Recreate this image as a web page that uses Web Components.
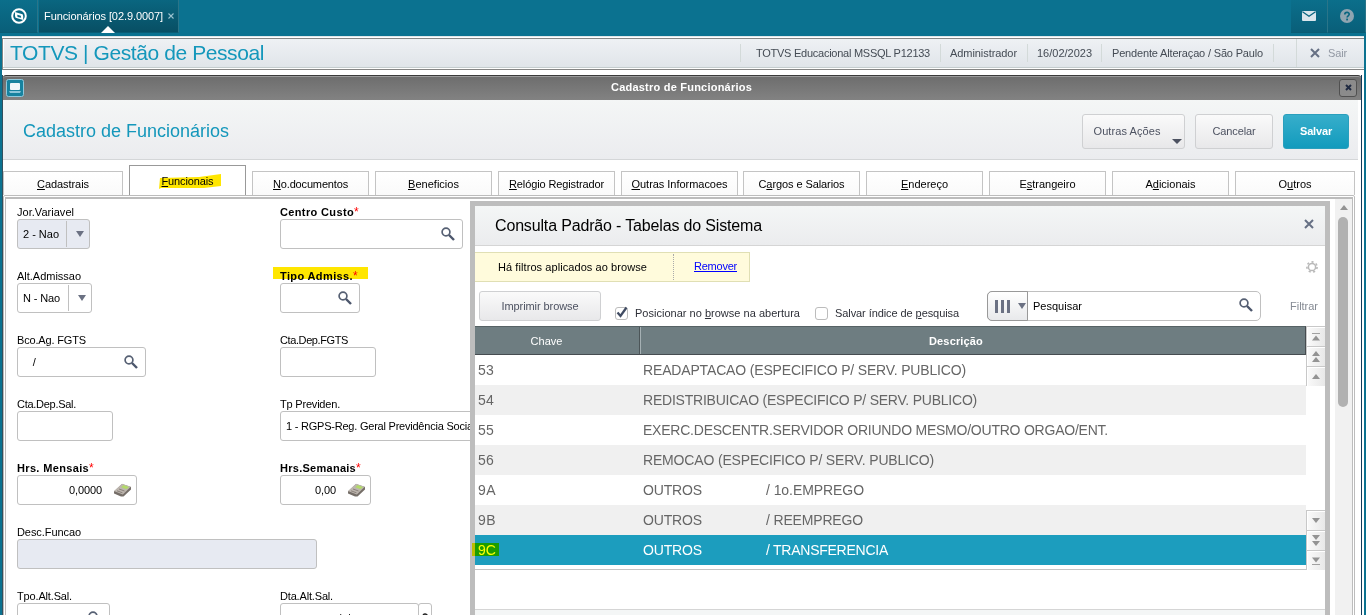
<!DOCTYPE html>
<html lang="pt-BR">
<head>
<meta charset="utf-8">
<title>Cadastro de Funcionários</title>
<style>
  html, body { margin: 0; height: 615px; overflow: hidden; }
  body {
    width: 1366px;
    background: #0b7290;
    font: 11px/15px "Liberation Sans", Arial, sans-serif;
    color: #000;
  }
</style>
</head>
<body>
<rh-app></rh-app>

<script>
const icons = {
  logo: `<svg width="16" height="16" viewBox="0 0 16 16"><circle cx="8" cy="8" r="6.800" fill="none" stroke="#fff" stroke-width="2"/><path d="M4 4L8 5.200 11.600 6.200 12.200 8V12L8 10.800 4.600 9.800 4 8z" fill="#fff"/><path d="M6.200 6.800l3.600.9.300 2L6.600 8.900z" fill="#0b6a84"/></svg>`,
  mail: `<svg width="14" height="10" viewBox="0 0 14 10"><rect width="14" height="10" rx="1" fill="#dbe6ec"/><path d="M.5.8L7 5.300 13.500.8" fill="none" stroke="#0a6680" stroke-width="1.300"/></svg>`,
  help: `<svg width="14" height="14" viewBox="0 0 14 14"><circle cx="7" cy="7" r="7" fill="#90a5b1"/><path d="M4.800 5.500C4.800 2.600 9.300 2.700 9.200 5.300 9.100 6.800 7.100 6.900 7.100 8.600" fill="none" stroke="#0a6680" stroke-width="1.700"/><rect x="6.200" y="9.600" width="1.800" height="1.800" fill="#0a6680"/></svg>`,
  search: `<svg width="14" height="14" viewBox="0 0 14 14"><circle cx="5" cy="5" r="3.900" fill="none" stroke="#566073" stroke-width="1.700"/><path d="M8 8l5 5" stroke="#4c566c" stroke-width="2.400"/></svg>`,
  close: `<svg width="10" height="10" viewBox="0 0 10 10"><path d="M1 1l8 8M9 1L1 9" stroke="#667084" stroke-width="2"/></svg>`,
  tiny: `<svg width="6" height="6" viewBox="0 0 6 6"><path d="M.5.5l5 5M5.500.5l-5 5" stroke="#9cc3d0" stroke-width="1.100"/></svg>`,
  down: `<svg width="8" height="6" viewBox="0 0 8 6"><path d="M0 0h8L4 6z" fill="#6b7183"/></svg>`,
  screen: `<svg width="18" height="18" viewBox="0 0 18 18"><rect x=".5" y=".5" width="17" height="17" rx="2" fill="#16829f" stroke="#8fc9dc"/><rect x="4" y="4" width="10" height="7" rx="1" fill="#eef6fa"/><path d="M3 12h12l-1 2H4z" fill="#8cc6da"/></svg>`,
  calc: `<svg width="19" height="14" viewBox="0 0 19 14"><path d="M1 8.500L9 1l9 3v2.500L10.500 13.500 8 13.500 1 10.500z" fill="#756e68"/><path d="M1 8L9 .8l8.800 3L9.800 11.500z" fill="#bdb6af"/><path d="M10.500 2l5.500 1.900-2.500 2.400-5.300-2z" fill="#b3da6a"/><path d="M4 7.800l5.500 2M6 6l5.500 2" stroke="#8a817a" stroke-width="1"/></svg>`,
  gear: `<svg width="12" height="12" viewBox="0 0 12 12"><circle cx="6" cy="6" r="3.600" fill="none" stroke="#b9b9b9" stroke-width="1.500"/><circle cx="6" cy="6" r="5.100" fill="none" stroke="#b9b9b9" stroke-width="1.600" stroke-dasharray="2.100 2.475"/></svg>`,
  check: `<svg width="15" height="15" viewBox="0 0 15 15"><path d="M3.500 6.500l3 3.500L12.500 1.500" fill="none" stroke="#414c63" stroke-width="2.300"/></svg>`,
  columns: `<svg width="15" height="13" viewBox="0 0 15 13"><path d="M1.500 0v13M7.500 0v13M13.500 0v13" stroke="#6b7183" stroke-width="3"/></svg>`,
  up: `<svg width="8" height="5" viewBox="0 0 8 5"><path d="M0 5h8L4 0z" fill="#939393"/></svg>`,
  top: `<svg width="8" height="8" viewBox="0 0 8 8"><path d="M0 .5h8" stroke="#a0a0a0"/><path d="M0 7.500h8L4 2.500z" fill="#939393"/></svg>`,
  up2: `<svg width="8" height="11" viewBox="0 0 8 11"><path d="M0 5h8L4 0zM0 11h8L4 6z" fill="#939393"/></svg>`,
  dn: `<svg width="8" height="5" viewBox="0 0 8 5"><path d="M0 0h8L4 5z" fill="#939393"/></svg>`,
  dn2: `<svg width="8" height="11" viewBox="0 0 8 11"><path d="M0 0h8L4 5zM0 6h8l-4 5z" fill="#939393"/></svg>`,
  bottom: `<svg width="8" height="8" viewBox="0 0 8 8"><path d="M0 7.500h8" stroke="#a0a0a0"/><path d="M0 .5h8l-4 5z" fill="#939393"/></svg>`
};

class UiIcon extends HTMLElement {
  connectedCallback() {
    if (this.shadowRoot) return;
    this.attachShadow({ mode: 'open' }).innerHTML = `
      <style>:host { display: block; flex: none; } svg { display: block; }</style>
      ${icons[this.getAttribute('name')] || ''}`;
  }
}

// Text with a fixed measure: the letter spacing is adjusted to the "w" width
class FitText extends HTMLElement {
  connectedCallback() {
    if (this.shadowRoot) return;
    this.attachShadow({ mode: 'open' }).innerHTML = `
      <style>:host { display: inline-block; flex: none; } span { white-space: pre; }</style><span><slot></slot></span>`;
    const w = Number(this.getAttribute('w'));
    if (!w) return;
    const natural = this.shadowRoot.querySelector('span').getBoundingClientRect().width;
    this.style.letterSpacing = (w - natural) / this.textContent.length + 'px';
    this.style.width = w + 'px';
  }
}

class TopBar extends HTMLElement {
  connectedCallback() {
    this.attachShadow({ mode: 'open' }).innerHTML = `
      <style>
        :host { display: flex; height: 36px; color: #fff; }
        .box { height: 33px; display: flex; align-items: center; justify-content: center; box-sizing: border-box;
          background: linear-gradient(#0b6f8b, #095f79); border-right: 1px solid #2a7589; border-bottom: 1px solid #0a5c74; }
        .logo { width: 38px; margin-right: 1px; }
        .tab { width: 140px; background: linear-gradient(#0a6680, #084f64); position: relative; justify-content: flex-start; padding-left: 5px; gap: 5px; }
        .tab::after { content: ""; position: absolute; left: 62px; bottom: -1px; border: 7px solid transparent; border-top: 0; border-bottom-color: #fff; }
        .mail { width: 37px; margin-left: auto; }
        .help { width: 38px; }
      </style>
      <div class="box logo"><ui-icon name="logo"></ui-icon></div>
      <div class="box tab"><fit-text w="119">Funcionários [02.9.0007]</fit-text><ui-icon name="tiny"></ui-icon></div>
      <div class="box mail"><ui-icon name="mail"></ui-icon></div>
      <div class="box help"><ui-icon name="help"></ui-icon></div>`;
  }
}

class AppHeader extends HTMLElement {
  connectedCallback() {
    this.attachShadow({ mode: 'open' }).innerHTML = `
      <style>
        :host { display: flex; align-items: center; box-sizing: border-box; height: 32px; margin-bottom: 5px;
          background: linear-gradient(#eef1f4, #dfe4e9); border: 1px solid #858585; border-right: 0;
          box-shadow: inset 0 -1px #fff, inset 0 -2px #c4ccce, inset 1px 0 #fff; color: #444b54; }
        h1 { margin: -2px auto 0 7px; font: 21px/26px "Liberation Sans", Arial, sans-serif; color: #1497bb; }
        .cell { height: 18px; line-height: 18px; box-sizing: border-box; border-left: 1px solid #d3dad9; margin-top: -2px; }
        .exit { height: 28px; width: 68px; display: flex; align-items: center; gap: 8px; padding-left: 13px; color: #9298a3; }
      </style>
      <h1><fit-text w="254">TOTVS | Gestão de Pessoal</fit-text></h1>
      <div class="cell" style="width:200px;padding-left:15px"><fit-text w="174">TOTVS Educacional MSSQL P12133</fit-text></div>
      <div class="cell" style="width:87px;padding-left:9px"><fit-text w="67">Administrador</fit-text></div>
      <div class="cell" style="width:74px;padding-left:9px"><fit-text w="55">16/02/2023</fit-text></div>
      <div class="cell" style="width:172px;padding-left:10px"><fit-text w="151">Pendente Alteraçao / São Paulo</fit-text></div>
      <div class="cell" style="width:23px"></div>
      <div class="cell exit"><ui-icon name="close"></ui-icon><fit-text w="19">Sair</fit-text></div>`;
  }
}

class WindowTitle extends HTMLElement {
  connectedCallback() {
    this.attachShadow({ mode: 'open' }).innerHTML = `
      <style>
        :host { display: flex; align-items: center; justify-content: space-between; height: 25px; box-sizing: border-box;
          padding: 0 4px 1px 3px; background: linear-gradient(#6d6d6d, #828282); border-top: 1px solid #3a3a3a;
          box-shadow: inset 0 1px #9b9b9b; border-radius: 3px 3px 0 0; color: #fff; font-weight: bold; }
        .close { width: 18px; height: 18px; box-sizing: border-box; border: 1px solid #505050; border-radius: 3px;
          background: #8b8b8b; display: grid; place-items: center; }
      </style>
      <ui-icon name="screen"></ui-icon>
      <fit-text w="141">${this.textContent}</fit-text>
      <div class="close"><svg width="7" height="7"><path d="M1 1l5 5M6 1L1 6" stroke="#202b42" stroke-width="2"/></svg></div>`;
  }
}

class UiButton extends HTMLElement {
  connectedCallback() {
    this.attachShadow({ mode: 'open' }).innerHTML = `
      <style>
        :host { display: flex; align-items: center; justify-content: center; box-sizing: border-box; position: relative;
          border: 1px solid #cfd0d2; border-radius: 3px; background: linear-gradient(#fafafa, #e8e8ea); color: #4d5261; }
        :host([primary]) { background: linear-gradient(#37aecb, #129bbd); border-color: #2a9fbd; color: #fff; font-weight: bold; }
        :host([menu]) { padding-right: 13px; }
        :host([menu])::after { content: ""; position: absolute; right: 2px; bottom: 4px; border: 5px solid transparent; border-bottom: 0; border-top-color: #4d5261; }
      </style><slot></slot>`;
  }
}

class FormTab extends HTMLElement {
  connectedCallback() {
    this.attachShadow({ mode: 'open' }).innerHTML = `
      <style>
        :host { display: flex; align-items: center; justify-content: center; box-sizing: border-box; width: 117px; height: 24px;
          border: 1px solid #c4c4c4; border-bottom: 0; background: linear-gradient(#fff, #fafafa); position: relative; padding-top: 1px; }
        :host([edge]) { width: 120px; }
        :host([active]) { height: 30px; border-color: #999; background: #fff; padding-top: 2px; }
        .text { position: relative; }
        svg { position: absolute; left: 29px; top: 8px; }
      </style>
      ${this.hasAttribute('active') ? '<svg width="64" height="16"><path d="M1 4L40 3 62 0v12l-17 2H2L0 15z" fill="#ffe600"/></svg>' : ''}
      <span class="text"><slot></slot></span>`;
  }
}

class FormField extends HTMLElement {
  connectedCallback() {
    const get = (name) => this.getAttribute(name) || '';
    const req = this.hasAttribute('required');
    const value = get('value') ? `<fit-text w="${get('vw')}">${get('value')}</fit-text>` : '';
    const icon = get('icon') ? `<span class="icon"><ui-icon name="${get('icon')}"></ui-icon></span>` : '';
    this.attachShadow({ mode: 'open' }).innerHTML = `
      <style>
        :host { display: block; height: 64px; }
        .label { height: 15px; line-height: 16px; position: relative; ${req ? 'font-weight: bold;' : ''} white-space: nowrap; }
        .label fit-text { position: relative; }
        .label em { color: #f00; font-style: normal; position: relative; font-weight: normal; font-size: 12px; }
        .mark { position: absolute; left: -7px; top: -1px; width: 95px; height: 12px; background: #ffe600; }
        .box { display: flex; align-items: center; height: 30px; box-sizing: border-box; width: ${get('width')}px;
          border: 1px solid #c0c0c0; border-radius: 3px; padding-left: 5px; background: #fff; }
        :host([disabled]) .box { background: #e7eaf2; }
        :host([numeric]) .box { justify-content: flex-end; }
        .icon { margin-left: auto; padding-right: 7px; }
        :host([select]) .icon { height: 26px; padding: 0 5px 0 9px; border-left: 1px solid #c0c0c0; display: flex; align-items: center; }
        :host([numeric]) .icon { padding-right: 4px; margin-left: 11px; }
        .row { display: flex; }
      </style>
      <div class="label">${this.hasAttribute('marked') ? '<span class="mark"></span>' : ''}<fit-text w="${get('lw')}">${get('label')}</fit-text>${req ? '<em>*</em>' : ''}</div>
      <div class="row"><div class="box">${value}${icon}</div><slot></slot></div>`;
  }
}

class EmployeeForm extends HTMLElement {
  connectedCallback() {
    this.attachShadow({ mode: 'open' }).innerHTML = `
      <style>
        :host { display: grid; grid-template-columns: 263px 1fr; grid-auto-rows: 64px; align-content: start; padding: 5px 0 0 11px; flex: 1; }
        .wide { grid-column: 1 / 3; }
        .cal { width: 14px; height: 30px; box-sizing: border-box; border: 1px solid #c0c0c0; border-radius: 3px; margin-left: -1px; display: flex; justify-content: center; padding-top: 9px; }
      </style>
      <form-field label="Jor.Variavel" lw="57" width="73" value="2 - Nao" vw="36" icon="down" select disabled></form-field>
      <form-field label="Centro Custo" lw="74" width="183" icon="search" required></form-field>
      <form-field label="Alt.Admissao" lw="64" width="75" value="N - Nao" vw="37" icon="down" select></form-field>
      <form-field label="Tipo Admiss." lw="73" width="80" icon="search" required marked></form-field>
      <form-field label="Bco.Ag. FGTS" lw="69" width="129" value="   /" vw="13" icon="search"></form-field>
      <form-field label="Cta.Dep.FGTS" lw="68" width="96"></form-field>
      <form-field label="Cta.Dep.Sal." lw="59" width="96"></form-field>
      <form-field label="Tp Previden." lw="60" width="260" value="1 - RGPS-Reg. Geral Previdência Social" vw="189"></form-field>
      <form-field label="Hrs. Mensais" lw="72" width="120" value="0,0000" vw="33" icon="calc" required numeric></form-field>
      <form-field label="Hrs.Semanais" lw="76" width="91" value="0,00" vw="21" icon="calc" required numeric></form-field>
      <form-field class="wide" label="Desc.Funcao" lw="64" width="300" disabled></form-field>
      <form-field label="Tpo.Alt.Sal." lw="55" width="93" icon="search"></form-field>
      <form-field label="Dta.Alt.Sal." lw="53" width="139" value="                  /  /" vw="64"><span class="cal"><svg width="6" height="8"><path d="M1 2Q3 0 5 2v3L3 7" fill="none" stroke="#222" stroke-width="1.500"/></svg></span></form-field>`;
  }
}

class BrowseTable extends HTMLElement {
  connectedCallback() {
    const rows = [
      ['53', 'READAPTACAO (ESPECIFICO P/ SERV. PUBLICO)', 323],
      ['54', 'REDISTRIBUICAO (ESPECIFICO P/ SERV. PUBLICO)', 334],
      ['55', 'EXERC.DESCENTR.SERVIDOR ORIUNDO MESMO/OUTRO ORGAO/ENT.', 465],
      ['56', 'REMOCAO (ESPECIFICO P/ SERV. PUBLICO)', 291],
      ['9A', 'OUTROS', 59, '/ 1o.EMPREGO', 98],
      ['9B', 'OUTROS', 59, '/ REEMPREGO', 97],
      ['9C', 'OUTROS', 59, '/ TRANSFERENCIA', 122]
    ];
    this.attachShadow({ mode: 'open' }).innerHTML = `
      <style>
        :host { display: flex; height: 244px; }
        .grid { width: 831px; border-bottom: 1px solid #c4c4c4; box-sizing: border-box; }
        .row { display: grid; grid-template-columns: 165px 123px 1fr; height: 30px; line-height: 30px; font-size: 14px; color: #666; }
        .row:nth-child(odd) { background: #f0f0f0; }
        .row.on { background: #1c9dbe; color: #fff; position: relative; }
        .row > fit-text { margin-left: 3px; }
        .row.long { grid-template-columns: 165px 1fr; }
        .head { display: grid; grid-template-columns: 165px 1fr; height: 29px; box-sizing: border-box; line-height: 28px; text-align: center;
          background: #6e7d81; color: #fff; border-top: 1px solid #566265; border-bottom: 1px solid #464c50; border-right: 1px solid #464c50; }
        .head div { height: 27px; }
        .head div + div { border-left: 1px solid #a5b0b3; font-weight: bold; padding-right: 34px; }
        .head div:first-child { border-right: 1px solid #4c5558; padding-right: 21px; }
        .mark { position: absolute; left: -3px; top: 8px; width: 27px; height: 13px; background: #ff0; mix-blend-mode: multiply; }
        .nav { width: 19px; display: flex; flex-direction: column; }
        .nav div { height: 20px; box-sizing: border-box; border: 1px solid #c8c8c8; border-width: 1px 0 0 1px; display: grid; place-items: center;
          background: linear-gradient(90deg, #fafafa, #e8e8e8); box-shadow: inset 1px 1px #fff; }
        .gap { flex: 1; }
      </style>
      <div class="grid">
        <div class="head"><div><fit-text w="32">Chave</fit-text></div><div><fit-text w="54">Descrição</fit-text></div></div>
        ${rows.map((r, i) => `<div class="row ${r[3] ? '' : 'long'} ${i === 6 ? 'on' : ''}">
          <fit-text w="${i < 4 ? 16 : 18}">${r[0]}</fit-text><fit-text w="${r[2]}">${r[1]}</fit-text>${r[3] ? `<fit-text w="${r[4]}">${r[3]}</fit-text>` : ''}
          ${i === 6 ? '<span class="mark"></span>' : ''}</div>`).join('')}
      </div>
      <div class="nav">
        <div><ui-icon name="top"></ui-icon></div><div><ui-icon name="up2"></ui-icon></div><div><ui-icon name="up"></ui-icon></div>
        <span class="gap"></span>
        <div><ui-icon name="dn"></ui-icon></div><div><ui-icon name="dn2"></ui-icon></div><div><ui-icon name="bottom"></ui-icon></div>
      </div>`;
  }
}

class LookupDialog extends HTMLElement {
  connectedCallback() {
    this.attachShadow({ mode: 'open' }).innerHTML = `
      <style>
        :host { display: block; box-sizing: border-box; width: 860px; height: 420px; border: 5px solid #bdbdbd; background: #fff; }
        header { display: flex; align-items: center; justify-content: space-between; height: 40px; box-sizing: border-box; padding: 1px 11px 0 20px;
          background: linear-gradient(#f4f6f6, #ebecee); border-bottom: 1px solid #d5d5d5; font-size: 16px; line-height: 20px; }
        header ui-icon { margin-top: -4px; }
        .filters { display: flex; justify-content: space-between; margin: 6px 7px 9px 0; align-items: center; height: 30px; }
        .filters > ui-icon { margin-top: -1px; }
        .notice { display: flex; align-items: center; height: 30px; width: 275px; box-sizing: border-box; border: 1px solid #e0dfb4; border-left: 0; background: #fffbdc; }
        .notice .msg { width: 199px; padding-left: 23px; box-sizing: border-box; border-right: 1px dotted #aaa; line-height: 26px; }
        .notice a { color: #00f; margin: -2px 0 0 20px; text-decoration: underline; }
        .notice a fit-text { text-decoration: underline; }
        .tools { display: flex; height: 30px; margin: 0 0 5px 4px; align-items: center; }
        .tools ui-button { width: 122px; height: 30px; margin-right: 14px; }
        .check { width: 13px; height: 13px; box-sizing: border-box; border: 1px solid #bcbcbc; border-radius: 3px; margin: 14px 7px 0 0; position: relative; color: #222; }
        .check ui-icon { position: absolute; left: -2px; top: -2px; }
        .lbl { margin: 14px 15px 0 0; color: #2e3038; }
        .search { display: flex; align-items: center; width: 274px; height: 30px; box-sizing: border-box; border: 1px solid #c0c0c0; border-radius: 5px; margin-left: auto; padding-right: 7px; }
        .cols { display: flex; gap: 8px; align-items: center; height: 30px; width: 41px; margin: -1px 5px -1px -1px; padding-left: 7px; box-sizing: border-box;
          border: 1px solid #999; border-radius: 5px 0 0 5px; background: linear-gradient(#fff, #e8e9eb); }
        .search > ui-icon { margin: -2px 0 0 auto; }
        .filter { color: #868b94; margin: 0 7px 0 29px; }
        footer { margin-top: 39px; border-top: 1px solid #d5d5d5; background: #f4f6f6; height: 12px; }
      </style>
      <header><fit-text w="267">Consulta Padrão - Tabelas do Sistema</fit-text><ui-icon name="close"></ui-icon></header>
      <div class="filters">
        <div class="notice"><span class="msg"><fit-text w="149">Há filtros aplicados ao browse</fit-text></span><a><fit-text w="43">Remover</fit-text></a></div>
        <ui-icon name="gear"></ui-icon>
      </div>
      <div class="tools">
        <ui-button><fit-text w="77">Imprimir browse</fit-text></ui-button>
        <span class="check"><ui-icon name="check"></ui-icon></span><span class="lbl"><fit-text w="165">Posicionar no <u>b</u>rowse na abertura</fit-text></span>
        <span class="check"></span><span class="lbl"><fit-text w="124">Salvar índice de <u>p</u>esquisa</fit-text></span>
        <div class="search"><span class="cols"><ui-icon name="columns"></ui-icon><ui-icon name="down"></ui-icon></span><fit-text w="49">Pesquisar</fit-text><ui-icon name="search"></ui-icon></div>
        <span class="filter"><fit-text w="28">Filtrar</fit-text></span>
      </div>
      <browse-table></browse-table>
      <footer></footer>`;
  }
}

class RhApp extends HTMLElement {
  connectedCallback() {
    this.attachShadow({ mode: 'open' }).innerHTML = `
      <style>
        :host { display: block; height: 615px; overflow: hidden; position: relative; }
        main { margin: 0 2px; height: 579px; background: #fff; box-sizing: border-box; padding-top: 2px; box-shadow: inset 0 1px #dfe6e8; }
        .window { margin-right: 2px; border-right: 1px solid #123a58; border-left: 1px solid #33505e; }
        .head { height: 60px; margin-right: 3px; box-sizing: border-box; display: flex; align-items: center; gap: 10px; padding: 3px 9px 0 20px;
          background: linear-gradient(#f4f6f6, #ebecef); border-bottom: 1px solid #d4d6d8; }
        h2 { margin: 0 auto 0 0; font: 18px/22px "Liberation Sans", Arial, sans-serif; color: #1497bb; }
        .head ui-button { height: 35px; }
        .tabs { height: 35px; display: flex; align-items: flex-end; gap: 6px; }
        .tabs .near { margin-left: -1px; }
        .panel { margin-right: 6px; height: 430px; box-sizing: border-box; border: 1px solid #bcbcbc; border-radius: 2px; padding: 1px; display: flex; }
        .inner { flex: 1; display: flex; border: 1px solid #bcbcbc; border-top-width: 2px; }
        lookup-dialog { position: absolute; left: 470px; top: 201px; }
        .scroll { width: 17px; background: #f1f1f1; display: flex; flex-direction: column; align-items: center; padding-top: 6px; box-sizing: border-box; }
        .thumb { width: 10px; height: 190px; margin: 7px 1px 0 0; border-radius: 5px; background: #b1b1b1; }
      </style>
      <top-bar></top-bar>
      <main>
        <app-header></app-header>
        <div class="window">
          <window-title>Cadastro de Funcionários</window-title>
          <div class="head">
            <h2><fit-text w="206">Cadastro de Funcionários</fit-text></h2>
            <ui-button menu style="width:103px"><fit-text w="67">Outras Ações</fit-text></ui-button>
            <ui-button style="width:78px"><fit-text w="43">Cancelar</fit-text></ui-button>
            <ui-button primary style="width:66px"><fit-text w="32">Salvar</fit-text></ui-button>
          </div>
          <div class="tabs">
            <form-tab edge><fit-text w="52"><u>C</u>adastrais</fit-text></form-tab>
            <form-tab active><fit-text w="52"><u>F</u>uncionais</fit-text></form-tab>
            <form-tab><fit-text w="75"><u>N</u>o.documentos</fit-text></form-tab>
            <form-tab><fit-text w="51"><u>B</u>eneficios</fit-text></form-tab>
            <form-tab><fit-text w="95"><u>R</u>elógio Registrador</fit-text></form-tab>
            <form-tab><fit-text w="96"><u>O</u>utras Informacoes</fit-text></form-tab>
            <form-tab class="near"><fit-text w="86">C<u>a</u>rgos e Salarios</fit-text></form-tab>
            <form-tab><fit-text w="47"><u>E</u>ndereço</fit-text></form-tab>
            <form-tab><fit-text w="56">E<u>s</u>trangeiro</fit-text></form-tab>
            <form-tab><fit-text w="50">A<u>d</u>icionais</fit-text></form-tab>
            <form-tab edge><fit-text w="33">O<u>u</u>tros</fit-text></form-tab>
          </div>
          <div class="panel"><div class="inner">
            <employee-form></employee-form>
            <div class="scroll"><ui-icon name="up"></ui-icon><div class="thumb"></div></div>
          </div></div>
        </div>
      </main>
      <lookup-dialog></lookup-dialog>`;
  }
}

customElements.define('rh-app', RhApp);
customElements.define('top-bar', TopBar);
customElements.define('app-header', AppHeader);
customElements.define('window-title', WindowTitle);
customElements.define('ui-button', UiButton);
customElements.define('form-tab', FormTab);
customElements.define('employee-form', EmployeeForm);
customElements.define('form-field', FormField);
customElements.define('lookup-dialog', LookupDialog);
customElements.define('browse-table', BrowseTable);
customElements.define('ui-icon', UiIcon);
customElements.define('fit-text', FitText);
</script>
</body>
</html>
